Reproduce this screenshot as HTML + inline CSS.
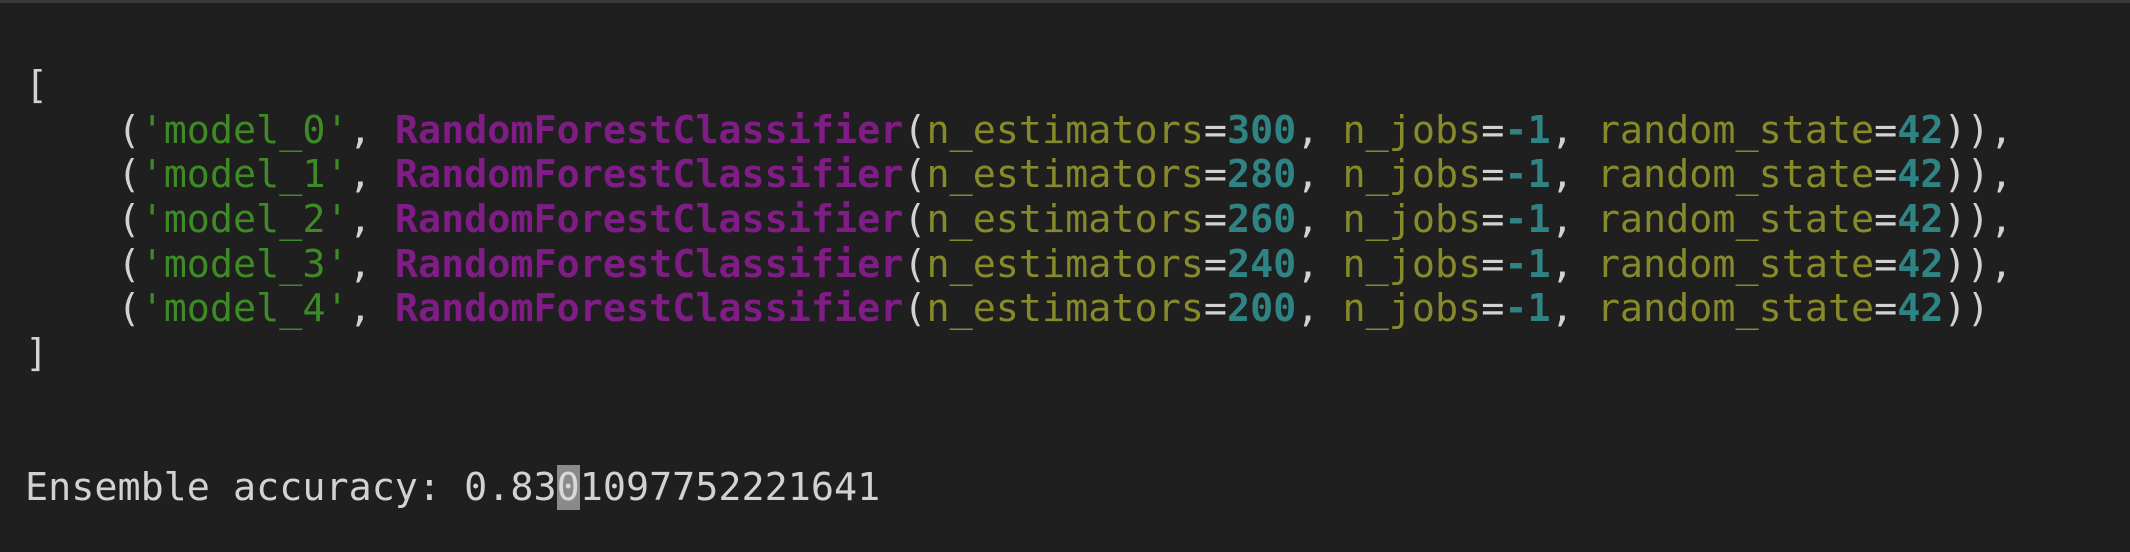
<!DOCTYPE html>
<html><head><meta charset="utf-8"><style>
html,body{margin:0;padding:0;}
body{width:2130px;height:552px;background:#1f1f1f;overflow:hidden;position:relative;}
.top{position:absolute;left:0;top:0;width:2130px;height:3px;background:#3b3b3d;}
pre{position:absolute;left:25px;top:64px;margin:0;font-family:"DejaVu Sans Mono","Liberation Mono",monospace;font-size:38.4px;line-height:44.67px;color:#d2d2d2;white-space:pre;}
.g{color:#3e8a26}
.p{color:#801c86;font-weight:bold}
.o{color:#878a2a}
.t{color:#2f8383;font-weight:bold}
.cur{background:#8a8a8a;color:#d8d8d8}
</style></head><body><div class="top"></div>
<pre>[
    (<span class="g">'model_0'</span>, <span class="p">RandomForestClassifier</span>(<span class="o">n_estimators</span>=<span class="t">300</span>, <span class="o">n_jobs</span>=<span class="t">-1</span>, <span class="o">random_state</span>=<span class="t">42</span>)),
    (<span class="g">'model_1'</span>, <span class="p">RandomForestClassifier</span>(<span class="o">n_estimators</span>=<span class="t">280</span>, <span class="o">n_jobs</span>=<span class="t">-1</span>, <span class="o">random_state</span>=<span class="t">42</span>)),
    (<span class="g">'model_2'</span>, <span class="p">RandomForestClassifier</span>(<span class="o">n_estimators</span>=<span class="t">260</span>, <span class="o">n_jobs</span>=<span class="t">-1</span>, <span class="o">random_state</span>=<span class="t">42</span>)),
    (<span class="g">'model_3'</span>, <span class="p">RandomForestClassifier</span>(<span class="o">n_estimators</span>=<span class="t">240</span>, <span class="o">n_jobs</span>=<span class="t">-1</span>, <span class="o">random_state</span>=<span class="t">42</span>)),
    (<span class="g">'model_4'</span>, <span class="p">RandomForestClassifier</span>(<span class="o">n_estimators</span>=<span class="t">200</span>, <span class="o">n_jobs</span>=<span class="t">-1</span>, <span class="o">random_state</span>=<span class="t">42</span>))
]


Ensemble accuracy: 0.83<span class="cur">0</span>1097752221641</pre>
</body></html>
